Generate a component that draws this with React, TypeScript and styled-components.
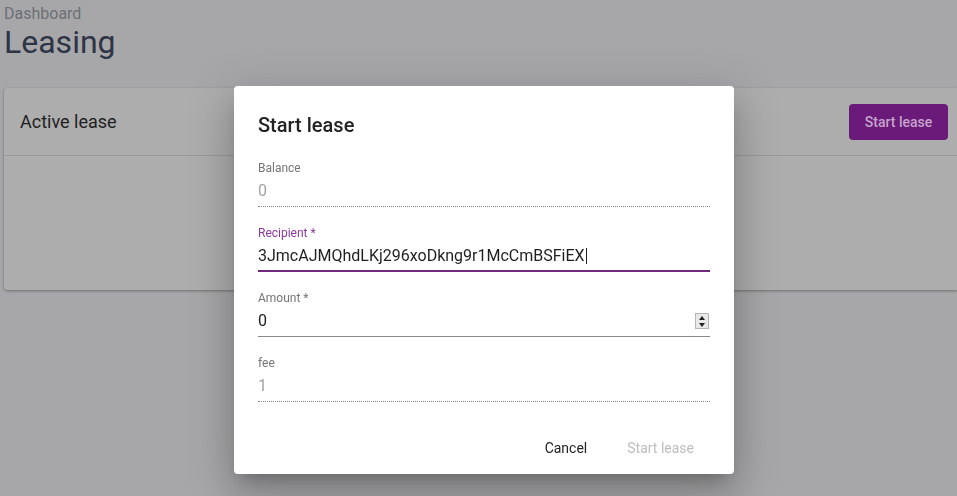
import React from "react";
import styled, { createGlobalStyle } from "styled-components";

const Global = createGlobalStyle`
  html, body { margin: 0; padding: 0; }
  body {
    background: #a7a7a9;
    font-family: Roboto, "Noto Sans", Arial, sans-serif;
    width: 957px;
    height: 496px;
    overflow: hidden;
  }
`;

const Page = styled.div`
  padding: 4px 0 0 4px;
  display: flex;
  flex-direction: column;
`;

const Crumb = styled.div`
  font-size: 16px;
  line-height: 20px;
  color: #6c6f76;
`;

const PageTitle = styled.h1`
  margin: 0;
  font-size: 32px;
  line-height: 37px;
  font-weight: 400;
  color: #2d3446;
`;

const Card = styled.div`
  margin-top: 27px;
  height: 202px;
  background: #adadad;
  border-radius: 4px 0 0 4px;
  box-shadow: 0 1px 3px rgba(0, 0, 0, 0.35);
  display: flex;
  flex-direction: column;
`;

const CardHeader = styled.div`
  height: 67px;
  display: flex;
  align-items: center;
  justify-content: space-between;
  padding: 0 9px 0 16px;
  border-bottom: 1px solid #9a9a9a;
`;

const CardTitle = styled.div`
  font-size: 18px;
  color: #1f1f1f;
`;

const PrimaryButton = styled.button`
  height: 36px;
  width: 99px;
  border: none;
  border-radius: 4px;
  background: #6a1b7a;
  color: #c6a3cc;
  font-family: inherit;
  font-size: 14px;
  font-weight: 500;
  padding: 0;
`;

const Overlay = styled.div`
  position: fixed;
  inset: 0;
  display: flex;
  align-items: flex-start;
  padding: 86px 0 0 234px;
`;

const Dialog = styled.div`
  width: 500px;
  background: #fff;
  border-radius: 4px;
  box-shadow: 0px 11px 15px -7px rgba(0, 0, 0, 0.2),
    0px 24px 38px 3px rgba(0, 0, 0, 0.14), 0px 9px 46px 8px rgba(0, 0, 0, 0.12);
  display: flex;
  flex-direction: column;
`;

const DialogTitle = styled.h2`
  margin: 0;
  padding: 23px 24px 0;
  font-size: 20px;
  line-height: 32px;
  font-weight: 500;
  color: #222;
`;

const Fields = styled.div`
  padding: 20px 24px 20px;
  display: flex;
  flex-direction: column;
  gap: 19px;
`;

const Field = styled.div`
  display: flex;
  flex-direction: column;
`;

const Label = styled.div<{ $focused?: boolean }>`
  font-size: 12px;
  line-height: 14px;
  color: ${(p) => (p.$focused ? "#8b3a9c" : "#757575")};
`;

const ValueRow = styled.div<{ $variant: "disabled" | "focused" | "normal" }>`
  margin-top: 6px;
  height: 20px;
  padding-bottom: ${(p) => (p.$variant === "focused" ? "4px" : "5px")};
  display: flex;
  align-items: center;
  font-size: 16px;
  line-height: 20px;
  color: ${(p) => (p.$variant === "disabled" ? "#a3a3a3" : "#1f1f1f")};
  border-bottom: ${(p) =>
    p.$variant === "disabled"
      ? "1px dotted #8a8a8a"
      : p.$variant === "focused"
      ? "2px solid #6f2a7c"
      : "1px solid #8a8a8a"};
`;

const ValueText = styled.span`
  flex: 1;
`;

const Caret = styled.span`
  display: inline-block;
  width: 1px;
  height: 16px;
  background: #222;
  vertical-align: -3px;
  margin-left: 1px;
`;

const Spinner = styled.div`
  width: 12px;
  height: 14px;
  margin-right: 1px;
  border: 1px solid #b5b5b5;
  background: #e9e9e9;
  display: flex;
  flex-direction: column;
  align-items: center;
  justify-content: space-around;
`;

const Actions = styled.div`
  display: flex;
  justify-content: flex-end;
  gap: 8px;
  padding: 8px 24px;
`;

const TextButton = styled.button<{ $disabled?: boolean }>`
  height: 36px;
  padding: 6px 16px;
  border: none;
  background: transparent;
  font-family: inherit;
  font-size: 14px;
  font-weight: 400;
  color: ${(p) => (p.$disabled ? "#bdbdbd" : "#222")};
`;

export default function App() {
  return (
    <>
      <Global />
      <Page>
        <Crumb>Dashboard</Crumb>
        <PageTitle>Leasing</PageTitle>
        <Card>
          <CardHeader>
            <CardTitle>Active lease</CardTitle>
            <PrimaryButton>Start lease</PrimaryButton>
          </CardHeader>
        </Card>
      </Page>
      <Overlay>
        <Dialog>
          <DialogTitle>Start lease</DialogTitle>
          <Fields>
            <Field>
              <Label>Balance</Label>
              <ValueRow $variant="disabled">
                <ValueText>0</ValueText>
              </ValueRow>
            </Field>
            <Field>
              <Label $focused>Recipient *</Label>
              <ValueRow $variant="focused">
                <ValueText>
                  3JmcAJMQhdLKj296xoDkng9r1McCmBSFiEX
                  <Caret />
                </ValueText>
              </ValueRow>
            </Field>
            <Field>
              <Label>Amount *</Label>
              <ValueRow $variant="normal">
                <ValueText>0</ValueText>
                <Spinner>
                  <svg width="6" height="4" viewBox="0 0 6 4">
                    <path d="M0 4 L3 0 L6 4 Z" fill="#222" />
                  </svg>
                  <svg width="6" height="4" viewBox="0 0 6 4">
                    <path d="M0 0 L3 4 L6 0 Z" fill="#222" />
                  </svg>
                </Spinner>
              </ValueRow>
            </Field>
            <Field>
              <Label>fee</Label>
              <ValueRow $variant="disabled">
                <ValueText>1</ValueText>
              </ValueRow>
            </Field>
          </Fields>
          <Actions>
            <TextButton>Cancel</TextButton>
            <TextButton $disabled>Start lease</TextButton>
          </Actions>
        </Dialog>
      </Overlay>
    </>
  );
}
